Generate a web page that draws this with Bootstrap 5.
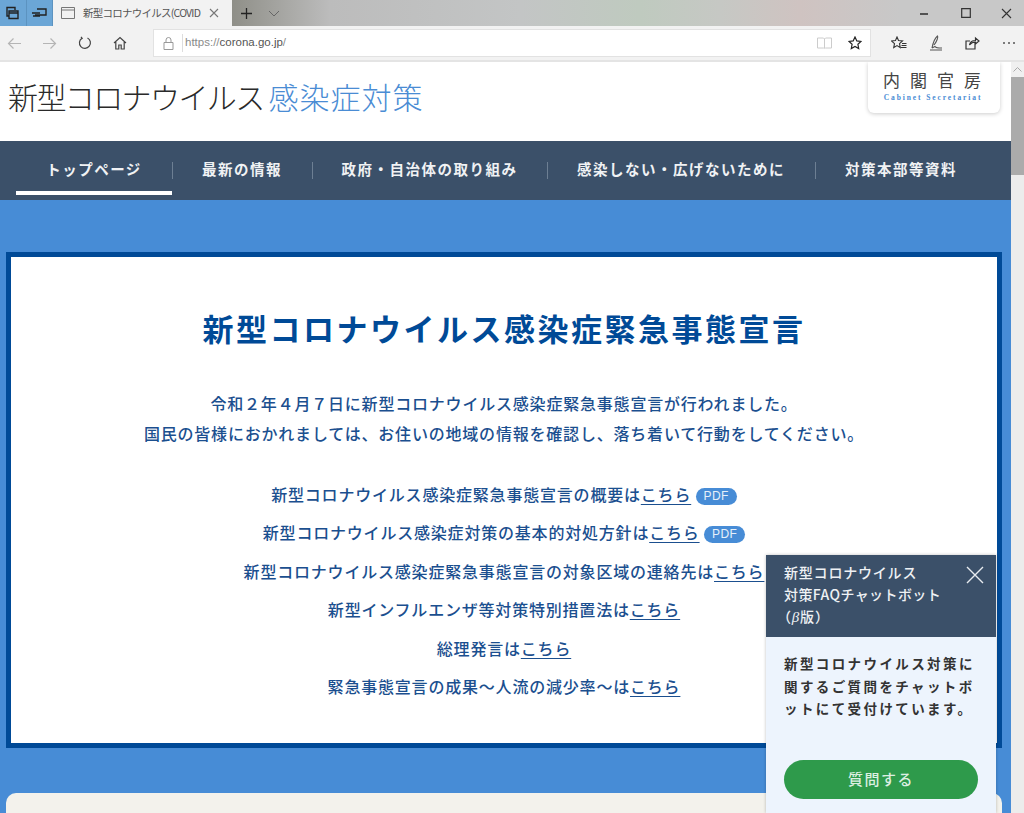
<!DOCTYPE html>
<html lang="ja">
  <head>
    <meta charset="UTF-8" />
    <meta name="viewport" content="width=device-width, initial-scale=1" />
    <title>新型コロナウイルス感染症対策</title>
    <link href="https://cdn.jsdelivr.net/npm/bootstrap@5.3.3/dist/css/bootstrap.min.css" rel="stylesheet" />
    <style>
      html, body { height: 100%; overflow: hidden; }
      body { font-family: "Noto Sans CJK JP", "Noto Sans", sans-serif; background: #fff; }
      svg { display: block; }

      /* browser frame */
      .tab-strip { height: 26px; background: linear-gradient(90deg, #8f8f88 232px, #bcbcbc 330px, #c3c5c5 520px, #bfcabf 640px, #c6c8c4 720px, #cfc3c1 800px, #c8c8c8 900px); }
      .tab-side { width: 26.5px; background: #6ba6d6; border-right: 1px solid #5c93c0; }
      .tab-open { width: 179px; background: #f2f2f2; font-size: 10.5px; color: #555; white-space: nowrap; }
      .tab-open span { width: 122px; letter-spacing: -.75px; }
      .tab-tool { width: 28px; }
      .win-btn { width: 40px; margin-right: 2px; }
      .win-end { width: 36px; margin-right: 0; }
      .addr-row { height: 36px; background: #f2f2f2; border-bottom: 2px solid #e4e4e4; }
      .addr-icon { width: 35px; }
      .addr-first { margin-left: -3px; }
      .addr-box { width: 718px; height: 28px; background: #fff; border: 1px solid #e2e2e2; font-family: "Liberation Sans", sans-serif; font-size: 11.5px; color: #8a8a8a; }
      .addr-box b { color: #555; font-weight: 400; }
      .addr-lock { width: 29px; height: 18px; border-right: 1px solid #ddd; }
      .addr-url { padding-left: 2px; }
      .addr-tools { width: 153px; padding-left: 20px; }

      /* page */
      .view-area { height: 751px; }
      .page-col { width: 1011px; }
      .scroll-col { width: 13px; background: #ececec; }
      .scroll-up { height: 15px; background: #f0f0f0; }
      .scroll-thumb { height: 98px; background: #ababab; }

      .site-head { height: 79px; padding-left: 8px; padding-right: 11px; }
      .site-title { font-size: 30px; font-weight: 300; line-height: 1; color: #2a2a2a; margin: 0; padding-bottom: 11px; letter-spacing: -1.6px; white-space: nowrap; }
      .site-title span { color: #4a8cd4; letter-spacing: 1px; margin-left: 5px; }
      .cabinet-box { width: 132px; height: 51px; border-radius: 0 0 6px 6px; box-shadow: 0 1px 4px rgba(0, 0, 0, .2); text-align: center; padding-top: 10px; padding-right: 4px; }
      .cabinet-jp { font-family: "Liberation Serif", "Noto Sans CJK JP", serif; font-size: 17px; line-height: 20px; letter-spacing: 10px; margin-right: -10px; color: #444; }
      .cabinet-en { font-family: "Liberation Serif", serif; font-size: 7.5px; line-height: 1; letter-spacing: 1.9px; margin-right: -2px; color: #4a8cd4; font-weight: 700; margin-top: 2px; }

      .site-nav { height: 59px; background: #3b5069; padding-left: 16px; }
      .nav-cell { height: 54px; font-size: 14.5px; font-weight: 700; letter-spacing: 1.5px; color: #f0f2f4; white-space: nowrap; position: relative; padding-top: 2px; }
      .nav-cell + .nav-cell::before { content: ""; position: absolute; left: 0; top: 21px; height: 17px; width: 1px; background: #6d7f93; }
      .nav-on { border-bottom: 4px solid #fff; padding-top: 6px; }
      .nav-w1 { width: 156px; }
      .nav-w2 { width: 140px; }
      .nav-w3 { width: 235px; }
      .nav-w4 { width: 268px; }
      .nav-w5 { width: 172px; }

      .blue-band { background: #478cd6; padding: 52px 9px 0 6px; height: 700px; }
      .notice-box { height: 496px; border: 5px solid #004a97; background: #fff; color: #1b4f8f; font-weight: 500; font-size: 16px; letter-spacing: .8px; text-align: center; padding-top: 49px; white-space: nowrap; }
      .notice-box h1 { font-size: 31px; font-weight: 700; letter-spacing: 2.5px; color: #004a97; line-height: 44px; margin: 0 0 38px; }
      .notice-intro { line-height: 30px; margin: 0 0 34px; }
      .notice-line { line-height: 24px; margin: 0 0 14.4px; }
      .notice-line a { color: #1b4f8f; text-underline-offset: 3px; }
      .pdf-tag { background: #478cd6; color: #e6f0fa; font-family: "Liberation Sans", sans-serif; font-size: 12px; line-height: 17px; padding: 0 8px; border-radius: 9px; display: inline-block; vertical-align: 1px; letter-spacing: .4px; font-weight: 400; }
      .next-box { height: 120px; background: #f3f2ec; border-radius: 10px 10px 0 0; margin-top: 45px; }

      /* chat bot popup, lies over the page */
      .chat-popup { position: absolute; right: 28px; bottom: 0; width: 230px; height: 258px; background: #edf4fd; box-shadow: 0 0 3px rgba(0, 0, 0, .25); }
      .chat-head { height: 82px; background: #3b5069; color: #eef1f4; font-size: 14px; font-weight: 500; line-height: 22px; padding: 6px 0 0 18px; position: relative; letter-spacing: .8px; }
      .chat-beta { margin-left: -7px; }
      .chat-beta i { font-family: "Liberation Serif", serif; font-size: 15px; }
      .chat-faq { letter-spacing: .4px; }
      .chat-close { position: absolute; right: 12px; top: 11px; }
      .chat-text { font-size: 13.5px; font-weight: 700; color: #333; line-height: 22.5px; letter-spacing: 2.4px; padding: 15px 10px 0 18px; height: 123px; }
      .chat-go { width: 194px; height: 39px; margin-left: 18px; border-radius: 20px; background: #2e9a4b; color: #dcefe1; font-size: 15px; font-weight: 500; letter-spacing: 1.5px; border: 0; padding: 0; }
    </style>
  </head>
  <body>

    <!-- Browser frame -->
    <div class="tab-strip d-flex">
      <div class="tab-side d-flex align-items-center justify-content-center">
        <svg width="14" height="14" viewBox="0 0 14 14" fill="none" stroke="#222" stroke-width="1.4"><path d="M1 4V1.500h8V4M3 5h9v7.500H3zM1 4v6h2M3 7h9"/></svg>
      </div>
      <div class="tab-side d-flex align-items-center justify-content-center">
        <svg width="16" height="12" viewBox="0 0 16 12" fill="none" stroke="#222" stroke-width="1.4"><path d="M6 2h9v6H4M1 6h8M2 9h7"/></svg>
      </div>
      <div class="tab-open d-flex align-items-center ps-2">
        <svg class="me-2" width="14" height="12" viewBox="0 0 14 12" fill="none" stroke="#777"><path d="M.5.500h13v11H.5zM.5 3h13"/></svg>
        <span>新型コロナウイルス(COVID</span>
        <svg class="ms-1" width="10" height="10" viewBox="0 0 10 10" stroke="#777" stroke-width="1.1"><path d="M1 1l8 8M9 1l-8 8"/></svg>
      </div>
      <div class="tab-tool d-flex align-items-center justify-content-center">
        <svg width="13" height="13" viewBox="0 0 13 13" stroke="#222" stroke-width="1.3"><path d="M6.500 1v11M1 6.500h11"/></svg>
      </div>
      <div class="tab-tool d-flex align-items-center justify-content-center">
        <svg width="12" height="7" viewBox="0 0 12 7" fill="none" stroke="#666"><path d="M1 1l5 5 5-5"/></svg>
      </div>
      <div class="flex-grow-1"></div>
      <div class="win-btn d-flex align-items-center justify-content-center">
        <svg width="10" height="10" viewBox="0 0 10 10" stroke="#222" stroke-width="1.4"><path d="M1 6h8"/></svg>
      </div>
      <div class="win-btn d-flex align-items-center justify-content-center">
        <svg width="10" height="10" viewBox="0 0 10 10" fill="none" stroke="#333" stroke-width="1.2"><path d="M.7.700h8.600v8.600H.7z"/></svg>
      </div>
      <div class="win-btn win-end d-flex align-items-center justify-content-center">
        <svg width="11" height="11" viewBox="0 0 11 11" stroke="#333" stroke-width="1.1"><path d="M1 1l9 9M10 1l-9 9"/></svg>
      </div>
    </div>
    <div class="addr-row d-flex align-items-center">
      <div class="addr-icon addr-first d-flex justify-content-center">
        <svg width="15" height="13" viewBox="0 0 15 13" fill="none" stroke="#b5b5b5" stroke-width="1.2"><path d="M14 6.500H1.500M6.500 1.500l-5 5 5 5"/></svg>
      </div>
      <div class="addr-icon d-flex justify-content-center">
        <svg width="15" height="13" viewBox="0 0 15 13" fill="none" stroke="#b5b5b5" stroke-width="1.2"><path d="M1 6.500h12.500M8.500 1.500l5 5-5 5"/></svg>
      </div>
      <div class="addr-icon d-flex justify-content-center">
        <svg width="14" height="14" viewBox="0 0 14 14" fill="none" stroke="#444" stroke-width="1.2"><path d="M9.500 2A5.500 5.500 0 1 1 4 2.200M3 .8l1.200 1.600L2.600 3.600"/></svg>
      </div>
      <div class="addr-icon d-flex justify-content-center">
        <svg width="14" height="14" viewBox="0 0 14 14" fill="none" stroke="#444" stroke-width="1.2"><path d="M1 7l6-5.500L13 7M2.800 6v7h3V9h2.400v4h3V6"/></svg>
      </div>
      <div class="addr-box d-flex align-items-center ms-3">
        <div class="addr-lock d-flex justify-content-center align-items-center">
          <svg width="11" height="13" viewBox="0 0 11 13" fill="none" stroke="#999"><path d="M1 5.500h9v7H1zM3 5.500V3a2.500 2.500 0 0 1 5 0v2.500"/></svg>
        </div>
        <div class="addr-url flex-grow-1">https://<b>corona.go.jp</b>/</div>
        <svg class="me-3" width="15" height="12" viewBox="0 0 15 12" fill="none" stroke="#ccc"><path d="M.5 1h6l1 1 1-1h6v10h-6l-1 .7-1-.7h-6zM7.500 2v9"/></svg>
        <svg class="me-2" width="14" height="14" viewBox="0 0 14 14" fill="none" stroke="#222" stroke-width="1.2"><path d="M7 1l1.800 3.900 4.200.5-3.100 2.900.8 4.200L7 10.400l-3.700 2.100.8-4.200L1 5.400l4.200-.5z"/></svg>
      </div>
      <div class="addr-tools d-flex justify-content-between align-items-center pe-2">
        <svg width="16" height="14" viewBox="0 0 16 14" fill="none" stroke="#333" stroke-width="1.1"><path d="M6 1l1.500 3.500 4 .4-3 2.700.8 4L6 9.600l-3.300 2 .8-4-3-2.700 4-.4zM11 7.500h4.500M10.500 9.500h5M10 11.500h5.500"/></svg>
        <svg width="14" height="16" viewBox="0 0 14 16" fill="none" stroke="#555" stroke-width="1.1"><path d="M3 13c1-5 3-10 5.500-12 1 1-1 6-3.500 9M3 13l3-1.500c1 1.500 2 1.500 7 1.500M1 15h12"/></svg>
        <svg width="15" height="14" viewBox="0 0 15 14" fill="none" stroke="#333" stroke-width="1.2"><path d="M10 6.500V13H1V5h4M4.500 9c.5-3 3-4.500 6-4.500V2L14 5l-3.500 3V6c-2.500 0-4.500 1-6 3z"/></svg>
        <svg width="14" height="4" viewBox="0 0 14 4" fill="#555"><circle cx="2" cy="2" r="1"/><circle cx="7" cy="2" r="1"/><circle cx="12" cy="2" r="1"/></svg>
      </div>
    </div>

    <div class="view-area d-flex overflow-hidden position-relative">
      <div class="page-col">

        <!-- Site header -->
        <div class="site-head d-flex justify-content-between align-items-start">
          <h2 class="site-title align-self-center">新型コロナウイルス<span>感染症対策</span></h2>
          <div class="cabinet-box bg-white">
            <div class="cabinet-jp">内閣官房</div>
            <div class="cabinet-en">Cabinet Secretariat</div>
          </div>
        </div>

        <!-- Site nav -->
        <div class="site-nav d-flex">
          <div class="nav-cell nav-w1 nav-on d-flex align-items-center justify-content-center">トップページ</div>
          <div class="nav-cell nav-w2 d-flex align-items-center justify-content-center">最新の情報</div>
          <div class="nav-cell nav-w3 d-flex align-items-center justify-content-center">政府・自治体の取り組み</div>
          <div class="nav-cell nav-w4 d-flex align-items-center justify-content-center">感染しない・広げないために</div>
          <div class="nav-cell nav-w5 d-flex align-items-center justify-content-center">対策本部等資料</div>
        </div>

        <!-- Emergency notice -->
        <div class="blue-band">
          <div class="notice-box">
            <h1>新型コロナウイルス感染症緊急事態宣言</h1>
            <p class="notice-intro">令和２年４月７日に新型コロナウイルス感染症緊急事態宣言が行われました。<br />国民の皆様におかれましては、お住いの地域の情報を確認し、落ち着いて行動をしてください。</p>
            <p class="notice-line">新型コロナウイルス感染症緊急事態宣言の概要は<a href="#">こちら</a> <span class="pdf-tag">PDF</span></p>
            <p class="notice-line">新型コロナウイルス感染症対策の基本的対処方針は<a href="#">こちら</a> <span class="pdf-tag">PDF</span></p>
            <p class="notice-line">新型コロナウイルス感染症緊急事態宣言の対象区域の連絡先は<a href="#">こちら</a></p>
            <p class="notice-line">新型インフルエンザ等対策特別措置法は<a href="#">こちら</a></p>
            <p class="notice-line">総理発言は<a href="#">こちら</a></p>
            <p class="notice-line">緊急事態宣言の成果～人流の減少率～は<a href="#">こちら</a></p>
          </div>
          <div class="next-box"></div>
        </div>
      </div>

      <div class="scroll-col">
        <div class="scroll-up d-flex align-items-center justify-content-center">
          <svg width="9" height="5" viewBox="0 0 9 5" fill="none" stroke="#aaa"><path d="M.5 4.500l4-4 4 4"/></svg>
        </div>
        <div class="scroll-thumb"></div>
      </div>

      <!-- Chat bot popup -->
      <div class="chat-popup">
        <div class="chat-head">
          新型コロナウイルス<br /><span class="chat-faq">対策FAQチャットボット</span><br /><span class="chat-beta">（<i>β</i>版）</span>
          <svg class="chat-close" width="18" height="18" viewBox="0 0 18 18" stroke="#e8ecf0" stroke-width="1.4"><path d="M1 1l16 16M17 1L1 17"/></svg>
        </div>
        <div class="chat-text">新型コロナウイルス対策に関するご質問をチャットボットにて受付けています。</div>
        <button type="button" class="chat-go d-block">質問する</button>
      </div>
    </div>

    <script src="https://cdn.jsdelivr.net/npm/bootstrap@5.3.3/dist/js/bootstrap.bundle.min.js"></script>
  </body>
</html>
